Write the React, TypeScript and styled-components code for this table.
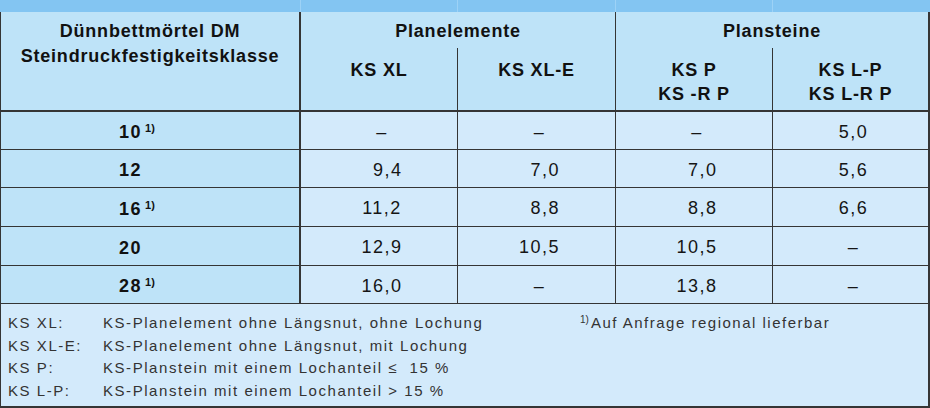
import styled, {createGlobalStyle} from 'styled-components';

const line = '#353535';
const headBg = '#bee3f8';
const cellBg = '#d3eafb';

interface Row {
  label: string;
  note?: boolean;
  values: string[];
}

// figure space keeps the digits lined up like in the print table
const F = '\u2007';

const rows: Row[] = [
  {label: '10', note: true, values: ['–', '–', '–', '5,0']},
  {label: '12', values: [F + '9,4', F + '7,0', F + '7,0', '5,6']},
  {label: '16', note: true, values: ['11,2', F + '8,8', F + '8,8', '6,6']},
  {label: '20', values: ['12,9', '10,5', '10,5', '–']},
  {label: '28', note: true, values: ['16,0', '–', '13,8', '–']},
];

const notes = [
  ['KS XL:', 'KS-Planelement ohne Längsnut, ohne Lochung'],
  ['KS XL-E:', 'KS-Planelement ohne Längsnut, mit Lochung'],
  ['KS P:', 'KS-Planstein mit einem Lochanteil ≤  15 %'],
  ['KS L-P:', 'KS-Planstein mit einem Lochanteil > 15 %'],
];

const App = () => {
  return (
    <>
      <GlobalStyle />
      <Sheet>
        <Strip>
          <StripCell />
          <StripCell />
          <StripCell />
          <StripCell />
          <StripCell $last />
        </Strip>
        <Grid>
          <CornerHead>
            Dünnbettmörtel DM
            <br />
            Steindruckfestigkeitsklasse
          </CornerHead>
          <GroupHead>Planelemente</GroupHead>
          <GroupHead $last>Plansteine</GroupHead>
          <SubHead>KS XL</SubHead>
          <SubHead>KS XL-E</SubHead>
          <SubHead>
            KS P
            <br />
            KS -R P
          </SubHead>
          <SubHead $last>
            KS L-P
            <br />
            KS L-R P
          </SubHead>
          {rows.map(row => (
            <RowGroup key={row.label}>
              <LabelCell>
                <Label>
                  {row.label}
                  <LabelSup>{row.note ? '1)' : ''}</LabelSup>
                </Label>
              </LabelCell>
              {row.values.map((v, i) => (
                <ValueCell key={i} $last={i === row.values.length - 1}>
                  {v}
                </ValueCell>
              ))}
            </RowGroup>
          ))}
        </Grid>
        <Footer>
          {notes.map(([k, text], i) => (
            <NoteRow key={k}>
              <NoteKey>{k}</NoteKey>
              <NoteText>{text}</NoteText>
              {i === 0 && (
                <FootNote>
                  <NoteSup>1)</NoteSup>Auf Anfrage regional lieferbar
                </FootNote>
              )}
            </NoteRow>
          ))}
        </Footer>
      </Sheet>
    </>
  );
};

const GlobalStyle = createGlobalStyle`
  html, body {
    margin: 0;
    padding: 0;
    background: #ffffff;
  }
  * {
    box-sizing: border-box;
  }
`;

const Sheet = styled.div`
  width: 930px;
  height: 408px;
  font-family: 'Liberation Sans', Arial, sans-serif;
  color: #111;
  display: flex;
  flex-direction: column;
`;

const columns = '300px 157px 158px 157px 1fr';

const Strip = styled.div`
  height: 12px;
  display: grid;
  grid-template-columns: ${columns};
  padding-left: 1px;
  padding-right: 2px;
  background: #83c5f2;
`;

const StripCell = styled.div<{$last?: boolean}>`
  border-right: ${p => (p.$last ? 'none' : '1px solid #9dd2f6')};
`;

const Grid = styled.div`
  display: grid;
  grid-template-columns: ${columns};
  grid-template-rows: 36px 64px 38px 38px 39px 39px 38px;
  border-left: 1px solid ${line};
  border-right: 2px solid ${line};
`;

const RowGroup = styled.div`
  display: contents;
`;

const HeadText = styled.div`
  background: ${headBg};
  font-weight: 700;
  font-size: 18px;
  letter-spacing: 0.8px;
  text-align: center;
`;

const CornerHead = styled(HeadText)`
  grid-row: 1 / 3;
  line-height: 25px;
  padding-top: 7px;
  border-right: 2px solid ${line};
  border-bottom: 2px solid ${line};
`;

const GroupHead = styled(HeadText)<{$last?: boolean}>`
  grid-column: span 2;
  line-height: 25px;
  padding-top: 7px;
  border-right: ${p => (p.$last ? 'none' : `1px solid ${line}`)};
`;

const SubHead = styled(HeadText)<{$last?: boolean}>`
  line-height: 24px;
  padding-top: 10px;
  border-bottom: 2px solid ${line};
  border-right: ${p => (p.$last ? 'none' : `1px solid ${line}`)};
`;

const LabelCell = styled.div`
  background: ${headBg};
  border-right: 2px solid ${line};
  border-bottom: 1px solid ${line};
  display: flex;
  justify-content: center;
  align-items: center;
  padding: 3px 16px 0 0;
`;

const Label = styled.span`
  font-weight: 700;
  font-size: 18px;
  letter-spacing: 1.4px;
  line-height: 20px;
`;

const LabelSup = styled.span`
  display: inline-block;
  width: 20px;
  margin-left: 3px;
  font-size: 11px;
  letter-spacing: 0.3px;
  vertical-align: 6px;
  line-height: 0;
`;

const ValueCell = styled.div<{$last?: boolean}>`
  background: ${cellBg};
  border-bottom: 1px solid ${line};
  border-right: ${p => (p.$last ? 'none' : `1px solid ${line}`)};
  display: flex;
  justify-content: center;
  align-items: center;
  padding: 3px 0 0 6px;
  font-size: 18px;
  letter-spacing: 1.5px;
  white-space: pre;
  color: #151515;
`;

const Footer = styled.div`
  flex: 1;
  background: ${cellBg};
  border-left: 1px solid ${line};
  border-right: 2px solid ${line};
  border-bottom: 2px solid ${line};
  padding: 8px 0 0 7px;
  color: #333;
  font-size: 15px;
  letter-spacing: 1.55px;
  line-height: 22.7px;
`;

const NoteRow = styled.div`
  display: grid;
  grid-template-columns: 95px 477px 1fr;
  white-space: pre;
`;

const NoteKey = styled.span``;

const NoteText = styled.span``;

const FootNote = styled.span`
  letter-spacing: 1.5px;
`;

const NoteSup = styled.sup`
  font-size: 10px;
  letter-spacing: 0;
  vertical-align: 5px;
  line-height: 0;
  margin-right: 2px;
`;

export default App;
